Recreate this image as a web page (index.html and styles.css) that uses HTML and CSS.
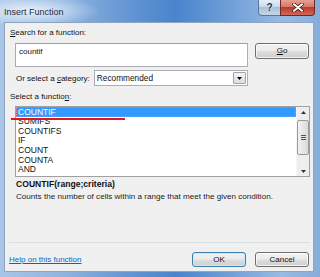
FILE: index.html
```html
<!DOCTYPE html>
<html>
<head>
<meta charset="utf-8">
<link rel="stylesheet" href="styles.css">
</head>
<body>
<div class="window">
  <div class="titlebar">
    <span class="title">Insert Function</span>
    <div class="caption-btns">
      <div class="cbtn help">?</div>
      <div class="cbtn close">
        <svg width="12" height="9" viewBox="0 0 12 9"><path d="M2 1.2 L10 7.8 M10 1.2 L2 7.8" stroke="#3b1510" stroke-width="3.4" stroke-linecap="round"/><path d="M2 1.2 L10 7.8 M10 1.2 L2 7.8" stroke="#fff" stroke-width="2" stroke-linecap="round"/></svg>
      </div>
    </div>
  </div>
  <div class="client">
    <div class="label l1"><u>S</u>earch for a function:</div>
    <div class="search-row">
      <div class="textbox">countif</div>
      <div class="btn go"><u>G</u>o</div>
    </div>
    <div class="cat-row">
      <span class="cat-label">Or select a <u>c</u>ategory:</span>
      <div class="combo">
        <span class="combo-text">Recommended</span>
        <span class="combo-arrow"><svg width="5" height="3" viewBox="0 0 5 3"><path d="M0 0 H5 L2.5 3 Z" fill="#000"/></svg></span>
      </div>
    </div>
    <div class="label l3">Select a functio<u>n</u>:</div>
    <div class="list-wrap">
      <div class="listbox">
        <div class="items">
          <div class="item sel">COUNTIF</div>
          <div class="item">SUMIFS</div>
          <div class="item">COUNTIFS</div>
          <div class="item">IF</div>
          <div class="item">COUNT</div>
          <div class="item">COUNTA</div>
          <div class="item">AND</div>
        </div>
        <div class="scrollbar">
          <div class="sb-arrow"><svg width="5" height="3" viewBox="0 0 5 3"><path d="M0 3 H5 L2.5 0 Z" fill="#333"/></svg></div>
          <div class="sb-thumb"><span class="grip"></span></div>
          <div class="sb-track"></div>
          <div class="sb-arrow"><svg width="5" height="3" viewBox="0 0 5 3"><path d="M0 0 H5 L2.5 3 Z" fill="#333"/></svg></div>
        </div>
      </div>
      <div class="redline"></div>
    </div>
    <div class="sig">COUNTIF(range;criteria)</div>
    <div class="desc">Counts the number of cells within a range that meet the given condition.</div>
    <div class="spacer"></div>
    <div class="sep"></div>
    <div class="footer">
      <a class="link">Help on this function</a>
      <div class="btn ok">OK</div>
      <div class="btn cancel">Cancel</div>
    </div>
  </div>
</div>
</body>
</html>
```
FILE: styles.css
```css
html, body {
  margin: 0;
  padding: 0;
  width: 320px;
  height: 277px;
  overflow: hidden;
}
body {
  font-family: "Liberation Sans", Arial, sans-serif;
  font-size: 8px;
  color: #111;
}
.window {
  box-sizing: border-box;
  width: 320px;
  height: 277px;
  display: flex;
  flex-direction: column;
  padding: 0 6px 5px 4px;
  background:
    radial-gradient(ellipse 70px 16px at 30px 11px, rgba(235,243,252,0.95), rgba(235,243,252,0) 100%),
    linear-gradient(to right, #a8c5e8 0%, #8fb4e0 20%, #5f93d2 42%, #4a84cc 55%, #6f9fd8 72%, #98bae4 88%, #88acd9 100%);
}
.titlebar {
  height: 22px;
  display: flex;
  align-items: flex-start;
  justify-content: space-between;
  flex: none;
}
.title {
  font-size: 9px;
  line-height: 12px;
  margin-top: 6px;
  color: #1e2a38;
}
.caption-btns {
  display: flex;
  margin-right: -1px;
}
.cbtn {
  box-sizing: border-box;
  height: 16px;
  display: flex;
  align-items: center;
  justify-content: center;
}
.help {
  width: 22px;
  border: 1px solid #5a76a0;
  border-top: none;
  border-right: none;
  border-radius: 0 0 0 4px;
  background: linear-gradient(#e6eef8 0%, #cbdaed 45%, #a9c0dc 50%, #c3d5ea 100%);
  color: #2a3444;
  font-weight: bold;
  font-size: 10px;
  text-shadow: 0 0 2px #fff;
}
.close {
  width: 35px;
  border: 1px solid #6b2b24;
  border-top: none;
  border-radius: 0 0 4px 0;
  background: linear-gradient(#e6a093 0%, #d57a6a 45%, #c0392b 50%, #d0685a 100%);
}
.client {
  flex: 1;
  display: flex;
  flex-direction: column;
  background: #f0f0f0;
  border: 1px solid #8da5c2;
  padding: 0 4px 4px 4px;
}
.label {
  height: 12px;
  line-height: 12px;
}
.l1 { margin-top: 4px; margin-left: 1px; }
.search-row {
  display: flex;
  align-items: flex-start;
  margin-top: 4px;
  height: 24px;
}
.textbox {
  box-sizing: border-box;
  width: 233px;
  height: 24px;
  margin-left: 6px;
  background: #fff;
  border: 1px solid #abadb3;
  border-top-color: #9aa0a8;
  padding: 2px 3px;
  line-height: 12px;
}
.btn {
  box-sizing: border-box;
  height: 16px;
  width: 54px;
  border: 1px solid #707070;
  border-radius: 3px;
  background: linear-gradient(#f2f2f2 0%, #ebebeb 48%, #dddddd 52%, #cfcfcf 100%);
  box-shadow: inset 0 0 0 1px rgba(255,255,255,0.7);
  text-align: center;
  line-height: 14px;
}
.go { margin-left: 7px; }
.cat-row {
  display: flex;
  align-items: center;
  margin-top: 3px;
  height: 16px;
}
.cat-label { margin-left: 7px; }
.combo {
  box-sizing: border-box;
  margin-left: 4px;
  width: 154px;
  height: 16px;
  border: 1px solid #abadb3;
  background: #fff;
  display: flex;
  align-items: stretch;
  justify-content: space-between;
}
.combo-text { padding-left: 2px; line-height: 14px; font-size: 8.3px; }
.combo-arrow {
  box-sizing: border-box;
  width: 13px;
  margin: 1px;
  border: 1px solid #a4a4a4;
  border-radius: 1px;
  background: linear-gradient(#f4f4f4, #dcdcdc);
  display: flex;
  align-items: center;
  justify-content: center;
}
.l3 { margin-top: 5px; margin-left: 1px; }
.list-wrap {
  position: relative;
  margin-top: 3px;
  margin-left: 6px;
  width: 295px;
  height: 71px;
}
.listbox {
  box-sizing: border-box;
  width: 295px;
  height: 71px;
  border: 1px solid #a0a0a0;
  background: #fff;
  display: flex;
}
.items {
  flex: 1;
}
.item {
  height: 9.7px;
  line-height: 9.7px;
  padding-left: 2px;
  font-size: 8.5px;
}
.item.sel {
  height: 10px;
  line-height: 10px;
  background: #3399ff;
  color: #fff;
  outline: 1px dotted #d080a0;
  outline-offset: -1px;
}
.scrollbar {
  width: 12px;
  background: #eeeeee;
  display: flex;
  flex-direction: column;
  border-left: 1px solid #f6f6f6;
}
.sb-arrow {
  height: 10px;
  display: flex;
  align-items: center;
  justify-content: center;
}
.sb-thumb {
  box-sizing: border-box;
  height: 35px;
  margin: 3px 0 0 0;
  border: 1px solid #9a9a9a;
  border-radius: 2px;
  background: linear-gradient(to right, #f2f2f2, #dadada);
  display: flex;
  align-items: center;
  justify-content: center;
}
.grip {
  width: 5px;
  height: 5px;
  background: repeating-linear-gradient(#555 0 1px, transparent 1px 2px);
}
.sb-track { flex: 1; }
.redline {
  position: absolute;
  left: -4px;
  top: 12px;
  width: 114px;
  height: 2px;
  background: #e8141a;
}
.sig {
  margin-top: 1px;
  margin-left: 7px;
  height: 12px;
  line-height: 12px;
  font-weight: bold;
  font-size: 8.6px;
}
.desc {
  margin-top: 1px;
  margin-left: 7px;
  height: 12px;
  line-height: 12px;
  color: #222;
  font-size: 8.1px;
}
.spacer { flex: 1; }
.sep {
  height: 1px;
  background: #d5dfe5;
  width: 301px;
}
.footer {
  display: flex;
  align-items: center;
  margin-top: 9px;
  height: 15px;
}
.link {
  color: #0066cc;
  text-decoration: underline;
  flex: 1;
}
.btn.ok {
  height: 15px;
  border-color: #3c7fb1;
  box-shadow: inset 0 0 0 1px #c8eaf8;
  line-height: 13px;
}
.btn.cancel {
  height: 15px;
  margin-left: 9px;
  line-height: 13px;
}
```
